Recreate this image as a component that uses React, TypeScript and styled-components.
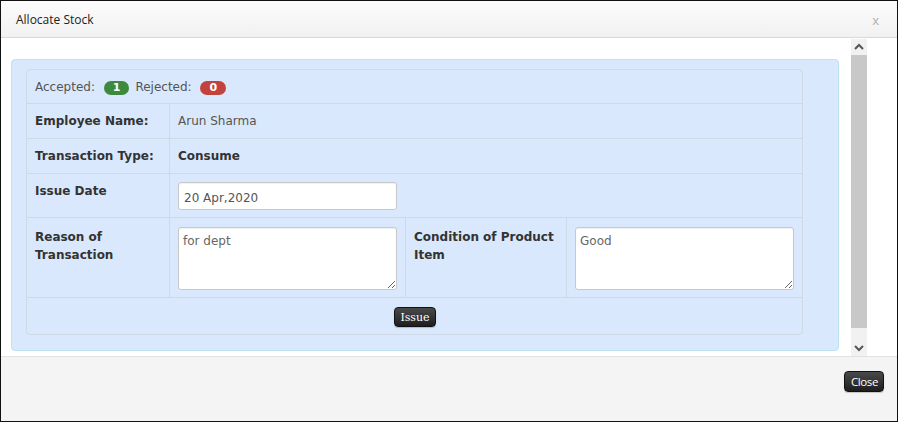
import styled, { createGlobalStyle } from "styled-components";

const GlobalSld = createGlobalStyle`
    html, body {
        margin: 0;
        padding: 0;
        background: #ffffff;
    }
    body {
        font-family: "DejaVu Sans", Verdana, sans-serif;
        font-size: 12px;
        color: #333333;
    }
`;

function Scrollbar(){
    return(
        <ScrollSld>
            <ArrowSld>
                <svg width="10" height="8" viewBox="0 0 10 8"><path d="M1 6 L5 2 L9 6" fill="none" stroke="#555" strokeWidth="2" /></svg>
            </ArrowSld>
            <ThumbSld />
            <ArrowSld>
                <svg width="10" height="8" viewBox="0 0 10 8"><path d="M1 2 L5 6 L9 2" fill="none" stroke="#555" strokeWidth="2" /></svg>
            </ArrowSld>
        </ScrollSld>
    )
}

function App(){
    return(
        <>
        <GlobalSld />
        <ModalSld>
            <HeaderSld>
                <TitleSld>Allocate Stock</TitleSld>
                <CloseXSld>x</CloseXSld>
            </HeaderSld>
            <BodySld>
                <ContentSld>
                    <PanelSld>
                        <TableSld>
                            <CellSld $span={4} $pad="10px 8px 8px">
                                Accepted: <BadgeSld $color="#3b8a3e">1</BadgeSld>
                                <GapSld />
                                Rejected: <BadgeSld $color="#c4423d">0</BadgeSld>
                            </CellSld>

                            <LabelSld>Employee Name:</LabelSld>
                            <CellSld $span={3} $line>Arun Sharma</CellSld>

                            <LabelSld>Transaction Type:</LabelSld>
                            <CellSld $span={3} $line $bold>Consume</CellSld>

                            <LabelSld>Issue Date</LabelSld>
                            <CellSld $span={3} $line $pad="8px 8px 7px">
                                <InputSld readOnly defaultValue="20 Apr,2020" />
                            </CellSld>

                            <LabelSld $tall>Reason of Transaction</LabelSld>
                            <CellSld $line $pad="9px 8px 7px">
                                <AreaSld readOnly defaultValue="for dept" />
                            </CellSld>
                            <LabelSld $tall $line>Condition of Product Item</LabelSld>
                            <CellSld $line $pad="9px 8px 7px">
                                <AreaSld readOnly defaultValue="Good" />
                            </CellSld>

                            <FootCellSld>
                                <IssueBtnSld>Issue</IssueBtnSld>
                            </FootCellSld>
                        </TableSld>
                    </PanelSld>
                </ContentSld>
                <Scrollbar />
                <RightGapSld />
            </BodySld>
            <FooterSld>
                <CloseBtnSld>Close</CloseBtnSld>
            </FooterSld>
        </ModalSld>
        </>
    )
}

const ModalSld = styled.div`
    width: 896px;
    height: 420px;
    border: 1px solid #111;
    display: flex;
    flex-direction: column;
    background: #fff;
    overflow: hidden;
`;

const HeaderSld = styled.div`
    height: 36px;
    flex: none;
    display: flex;
    align-items: center;
    justify-content: space-between;
    padding: 0 18px 0 15px;
    background: linear-gradient(#fcfcfc, #f1f1f1);
    border-bottom: 1px solid #d9d9d9;
`;

const TitleSld = styled.div`
    font-family: "Open Sans", sans-serif;
    font-size: 12px;
    color: #222;
`;

const CloseXSld = styled.div`
    font-family: "Open Sans", sans-serif;
    font-size: 13px;
    color: #b0b0b0;
    margin-top: 2px;
`;

const BodySld = styled.div`
    height: 318px;
    flex: none;
    display: flex;
    border-bottom: 1px solid #e2e2e2;
`;

const ContentSld = styled.div`
    flex: 1;
    padding: 21px 12px 0 10px;
`;

const PanelSld = styled.div`
    background: #d9e8fc;
    border: 1px solid #bde3f1;
    border-radius: 4px;
    padding: 9px 35px 15px 14px;
`;

const TableSld = styled.div`
    display: grid;
    grid-template-columns: 142px 236px 161px 1fr;
    border: 1px solid #cfd9e6;
    border-radius: 4px;
`;

const CellSld = styled.div<{ $span?: number; $line?: boolean; $bold?: boolean; $pad?: string }>`
    grid-column: span ${p => p.$span || 1};
    padding: ${p => p.$pad || "10px 8px 10px"};
    min-height: 14px;
    line-height: 14px;
    border-top: 1px solid #cfd9e6;
    border-left: ${p => p.$line ? "1px solid #cfd9e6" : "none"};
    font-weight: ${p => p.$bold ? "bold" : "normal"};
    color: ${p => p.$bold ? "#333" : "#555"};
    &:first-child {
        border-top: none;
    }
`;

const LabelSld = styled.div<{ $tall?: boolean; $line?: boolean }>`
    padding: ${p => p.$tall ? "10px 8px" : "10px 8px 10px"};
    line-height: ${p => p.$tall ? "18px" : "14px"};
    font-weight: bold;
    color: #333;
    border-top: 1px solid #cfd9e6;
    border-left: ${p => p.$line ? "1px solid #cfd9e6" : "none"};
`;

const BadgeSld = styled.span<{ $color: string }>`
    display: inline-block;
    background: ${p => p.$color};
    color: #fff;
    font-weight: bold;
    font-size: 11px;
    line-height: 14px;
    padding: 0 9px;
    border-radius: 8px;
    margin-left: 5px;
    vertical-align: 0;
`;

const GapSld = styled.span`
    display: inline-block;
    width: 6px;
`;

const InputSld = styled.input`
    box-sizing: border-box;
    width: 219px;
    height: 28px;
    border: 1px solid #c8c8c8;
    border-radius: 3px;
    padding: 4px 5px 0;
    font-family: "DejaVu Sans", Verdana, sans-serif;
    font-size: 12px;
    color: #555;
    background: #fff;
    box-shadow: inset 0 1px 1px rgba(0,0,0,0.06);
    outline: none;
`;

const AreaSld = styled.textarea`
    display: block;
    box-sizing: border-box;
    width: 219px;
    height: 63px;
    border: 1px solid #c8c8c8;
    border-radius: 3px;
    padding: 6px 4px;
    font-family: "DejaVu Sans", Verdana, sans-serif;
    font-size: 12px;
    color: #666;
    background: #fff;
    box-shadow: inset 0 1px 1px rgba(0,0,0,0.06);
    outline: none;
    resize: both;
`;

const FootCellSld = styled.div`
    grid-column: span 4;
    border-top: 1px solid #cfd9e6;
    display: flex;
    justify-content: center;
    padding: 9px 0 7px 0;
`;

const DarkBtnSld = styled.button`
    background: linear-gradient(#4a4a4a, #1e1e1e);
    color: #fff;
    border: 1px solid #111;
    border-radius: 4px;
    cursor: pointer;
    box-shadow: 0 1px 1px rgba(0,0,0,0.2);
`;

const IssueBtnSld = styled(DarkBtnSld)`
    font-family: "DejaVu Serif", serif;
    font-size: 11px;
    height: 20px;
    padding: 0 5px;
    margin-left: 1px;
`;

const FooterSld = styled.div`
    flex: 1;
    background: #f4f4f4;
    display: flex;
    justify-content: flex-end;
    align-items: flex-start;
    padding: 14px 13px 0 0;
`;

const CloseBtnSld = styled(DarkBtnSld)`
    font-family: "Open Sans", sans-serif;
    font-size: 11.5px;
    letter-spacing: -0.4px;
    height: 21px;
    padding: 0 5px 0 6px;
`;

const ScrollSld = styled.div`
    width: 16px;
    flex: none;
    display: flex;
    flex-direction: column;
    background: #f1f1f1;
    margin-top: 1px;
`;

const ArrowSld = styled.div`
    height: 16px;
    display: flex;
    align-items: center;
    justify-content: center;
`;

const ThumbSld = styled.div`
    flex: 1;
    background: #c8c8c8;
    margin: 0 0 12px 0;
`;

const RightGapSld = styled.div`
    width: 32px;
    flex: none;
`;

export default App;
